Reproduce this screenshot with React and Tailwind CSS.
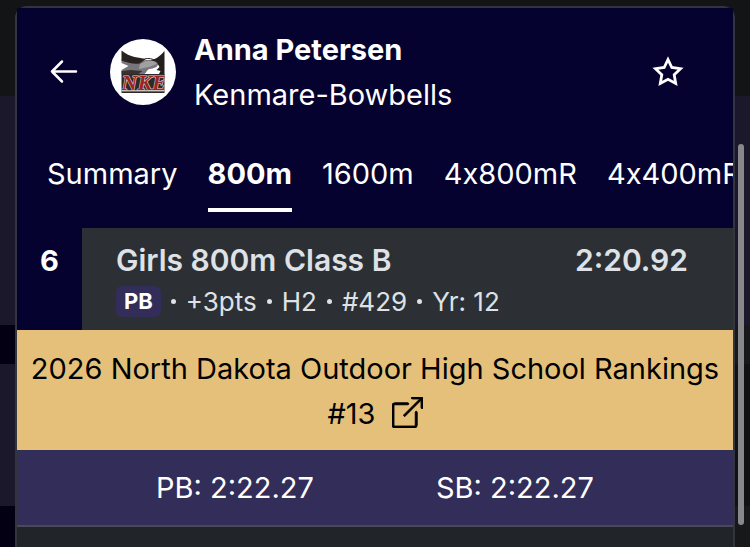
import { BsBoxArrowUpRight } from 'react-icons/bs';

const tabs = ['Summary', '800m', '1600m', '4x800mR', '4x400mR'];

const result = {
  place: 6,
  event: 'Girls 800m Class B',
  time: '2:20.92',
  details: ['+3pts', 'H2', '#429', 'Yr: 12'],
};

export default function App() {
  return (
    <div className="h-screen overflow-hidden flex bg-[#121415] font-['Inter',sans-serif] text-[29px] leading-[45px] text-white">
      <Backdrop side="left" />
      <main className="mt-[6px] flex-1 min-w-0 flex flex-col rounded-t-xl border-2 border-b-0 border-[#34343f] bg-[#212529]">
        <div className="bg-[#050230]">
          <AthleteHeader />
          <Tabs active="800m" />
        </div>
        <ResultRow result={result} />
        <a href="#rankings" className="block bg-[#e5c07b] px-3 pt-4 pb-[14px] text-center text-black">
          2026 North Dakota Outdoor High School Rankings #13{' '}
          <BsBoxArrowUpRight strokeWidth="0.5" className="inline-block ml-2 w-[31px] h-[31px] align-[-4px]" />
        </a>
        <div className="flex justify-around bg-[#322d59] border-b-2 border-[#494856] px-[78px] py-[15px]">
          <span>PB: 2:22.27</span>
          <span>SB: 2:22.27</span>
        </div>
      </main>
      <Backdrop side="right" />
    </div>
  );
}

function AthleteHeader() {
  return (
    <header className="flex items-center pl-8 pr-[49px] pt-[19px] pb-[34px]">
      <button aria-label="Back" className="cursor-pointer">
        <svg viewBox="0 0 30 30" className="w-[30px] h-[30px]" fill="none" stroke="currentColor" strokeWidth="2.5" strokeLinecap="round" strokeLinejoin="round">
          <path d="M13 4.500L3 14.500l10 10M3 14.500h24" />
        </svg>
      </button>
      <TeamLogo />
      <div className="ml-[18px] flex-1">
        <h1 className="font-bold">Anna Petersen</h1>
        <p>Kenmare-Bowbells</p>
      </div>
      <button aria-label="Favorite" className="cursor-pointer">
        <svg viewBox="0 0 32 32" className="w-8 h-8" fill="none" stroke="currentColor" strokeWidth="2.8">
          <path d="M16 3.500l3.800 8 8.700 1.200-6.300 6.100 1.500 8.700L16 23.300l-7.700 4.200 1.500-8.700-6.300-6.100 8.700-1.200z" />
        </svg>
      </button>
    </header>
  );
}

function TeamLogo() {
  return (
    <svg viewBox="0 0 66 66" className="ml-[31px] w-[66px] h-[66px] shrink-0" role="img" aria-label="Team logo">
      <circle cx="33" cy="33" r="33" fill="#fff" />
      {/* body and far wing */}
      <path d="M11.500 20l16 4 8-3h9l4 4-2 3-8 3-4 4h-23v-4l7-4-7-3z" fill="#77767a" />
      <path d="M30 25l6-3h8l3 3-8 3-10 2z" fill="#a09fa2" />
      <path d="M11.500 32l9-1 12 1-4 3H11.500z" fill="#37312f" />
      {/* wings */}
      <path d="M11.500 11.500c4 3.500 9 5.500 13 6.500 4 1 8 1 11 2.500l-6 4c-6 1-12-1-18-3z" fill="#28231f" />
      <path d="M54.500 12v24h-6l2-4-4-1 3-3-3-5-6-2c4 0 10-4 14-9z" fill="#231f1f" />
      <path d="M33 20.500c4-1.500 8-1.500 12 1" stroke="#28231f" strokeWidth="1" fill="none" />
      <path d="M36 34c1-5 8-6 11-1l1 2H36z" fill="#fff" />
      <rect x="11.500" y="35" width="43" height="19" fill="#30292a" />
      <rect x="11.500" y="51" width="43" height="1.500" fill="#b5aca8" />
      <svg x="11.500" y="35" width="43" height="18" viewBox="0 0 43 18">
        <text x="0" y="16" fontFamily="Liberation Serif, serif" fontWeight="bold" fontStyle="italic" fontSize="22" fill="#9c2522" stroke="#ddd3ce" strokeWidth="1.2" paintOrder="stroke">
          NKE
        </text>
      </svg>
    </svg>
  );
}

function Tabs({ active }) {
  return (
    <nav className="flex gap-[30px] overflow-x-auto [scrollbar-width:none] pl-[30px] pb-4 [font-feature-settings:'calt'_0]">
      {tabs.map(tab => (
        <button
          key={tab}
          className={`shrink-0 cursor-pointer pb-3 border-b-4 ${
            tab === active ? 'font-bold border-white' : 'border-transparent'
          }`}
        >
          {tab}
        </button>
      ))}
    </nav>
  );
}

function ResultRow({ result }) {
  return (
    <section className="flex bg-[#2c3034] text-[#dee2e6]">
      <div className="w-[65px] shrink-0 bg-[#050230] pt-[10px] text-center font-bold text-white">
        {result.place}
      </div>
      <div className="flex-1 pl-[34px] pr-[45px] pt-[10px] pb-[10px]">
        <div className="flex justify-between text-[30px] font-semibold">
          <h2>{result.event}</h2>
          <span>{result.time}</span>
        </div>
        <div className="flex items-center gap-[10px] text-[26px] leading-[37px]">
          <span className="rounded-md bg-[#322d59] px-2 text-[22px] leading-[31px] font-bold text-white">PB</span>
          {result.details.map(detail => (
            <span key={detail} className="flex items-center gap-[10px]">
              <i className="w-[5px] h-[5px] rounded-full bg-current" />
              {detail}
            </span>
          ))}
        </div>
      </div>
    </section>
  );
}

// strip of the dimmed page behind the sheet
function Backdrop({ side }) {
  if (side === 'left') {
    return (
      <div className="w-[15px] shrink-0 flex flex-col bg-[#030014]">
        <div className="h-24 bg-[#121415]" />
        <div className="h-[229px] bg-[#1b182b]" />
        <div className="h-[39px]" />
        <div className="h-[142px] bg-[#1b182b]" />
      </div>
    );
  }
  return (
    <div className="relative w-[15px] shrink-0 flex flex-col bg-[#17181a]">
      <div className="h-24 bg-[#121415]" />
      <div className="h-[229px] bg-[#1b182b]" />
      <div className="h-[39px]" />
      <div className="h-[142px] bg-[#101112]" />
      <div className="absolute left-[3px] top-[144px] w-[6px] h-[381px] rounded-full bg-[#88888c]" />
    </div>
  );
}
